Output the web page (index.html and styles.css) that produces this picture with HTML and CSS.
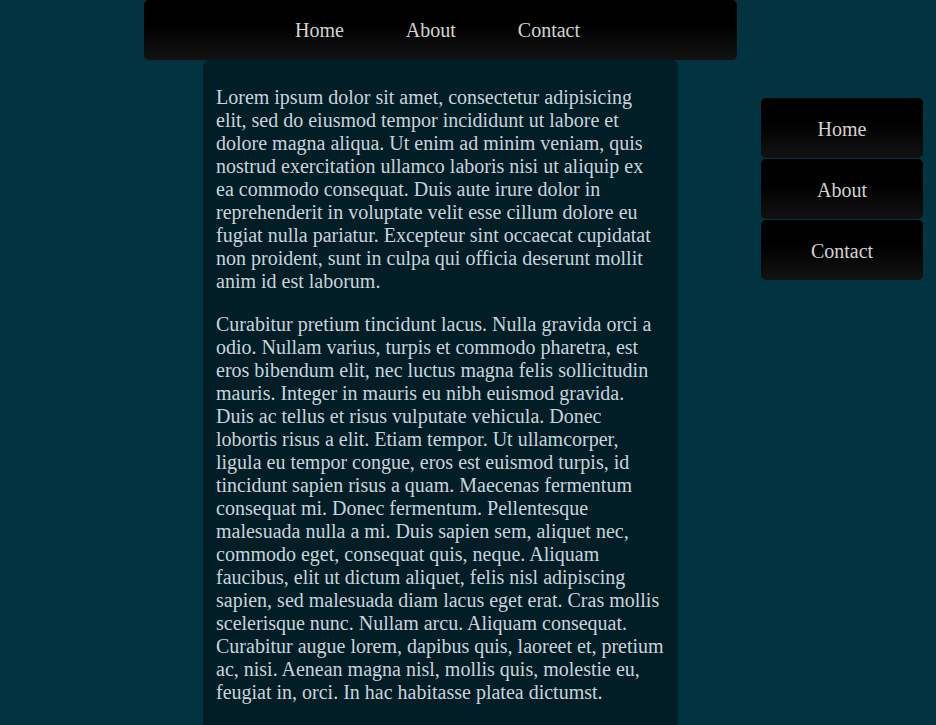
FILE: index.html
```html
<!DOCTYPE html>
<html>
<head>
<meta charset="utf-8">
<link rel="stylesheet" href="styles.css">
</head>
<body>
<div class="page">
  <div class="column">
    <nav class="topnav">
      <a href="#">Home</a>
      <a href="#">About</a>
      <a href="#">Contact</a>
    </nav>
    <main class="content">
      <p>Lorem ipsum dolor sit amet, consectetur adipisicing elit, sed do eiusmod tempor incididunt ut labore et dolore magna aliqua. Ut enim ad minim veniam, quis nostrud exercitation ullamco laboris nisi ut aliquip ex ea commodo consequat. Duis aute irure dolor in reprehenderit in voluptate velit esse cillum dolore eu fugiat nulla pariatur. Excepteur sint occaecat cupidatat non proident, sunt in culpa qui officia deserunt mollit anim id est laborum.</p>
      <p>Curabitur pretium tincidunt lacus. Nulla gravida orci a odio. Nullam varius, turpis et commodo pharetra, est eros bibendum elit, nec luctus magna felis sollicitudin mauris. Integer in mauris eu nibh euismod gravida. Duis ac tellus et risus vulputate vehicula. Donec lobortis risus a elit. Etiam tempor. Ut ullamcorper, ligula eu tempor congue, eros est euismod turpis, id tincidunt sapien risus a quam. Maecenas fermentum consequat mi. Donec fermentum. Pellentesque malesuada nulla a mi. Duis sapien sem, aliquet nec, commodo eget, consequat quis, neque. Aliquam faucibus, elit ut dictum aliquet, felis nisl adipiscing sapien, sed malesuada diam lacus eget erat. Cras mollis scelerisque nunc. Nullam arcu. Aliquam consequat. Curabitur augue lorem, dapibus quis, laoreet et, pretium ac, nisi. Aenean magna nisl, mollis quis, molestie eu, feugiat in, orci. In hac habitasse platea dictumst.</p>
    </main>
  </div>
  <aside class="sidenav">
    <a href="#">Home</a>
    <a href="#">About</a>
    <a href="#">Contact</a>
  </aside>
</div>
</body>
</html>
```
FILE: styles.css
```css
html, body {
  margin: 0;
  padding: 0;
  background: #023340;
  font-family: "Liberation Serif", "Times New Roman", serif;
  font-size: 20px;
}

.page {
  display: flex;
  align-items: flex-start;
  padding-left: 144px;
}

.column {
  width: 593px;
  display: flex;
  flex-direction: column;
  align-items: center;
}

.topnav {
  width: 100%;
  height: 60px;
  display: flex;
  justify-content: center;
  align-items: center;
  gap: 62px;
  background: linear-gradient(to bottom, #000 0%, #000 40%, #121212 100%);
  border-radius: 5px;
  box-sizing: border-box;
  padding: 1px 6px 0 0;
}

.topnav a,
.sidenav a {
  color: #d2d2d2;
  text-decoration: none;
}

.content {
  width: 475px;
  box-sizing: border-box;
  background: #011e26;
  border-radius: 6px 6px 0 0;
  padding: 6px 13px 10px 13px;
  color: #c9d3dc;
  line-height: 23px;
  min-height: 700px;
}

.content p {
  margin: 20px 0;
}

.sidenav {
  margin-top: 98px;
  margin-left: 24px;
  width: 162px;
  display: flex;
  flex-direction: column;
  gap: 1px;
}

.sidenav a {
  height: 60px;
  box-sizing: border-box;
  padding-top: 2px;
  display: flex;
  align-items: center;
  justify-content: center;
  background: linear-gradient(to bottom, #000 0%, #000 40%, #121212 100%);
  border-radius: 5px;
}
```
